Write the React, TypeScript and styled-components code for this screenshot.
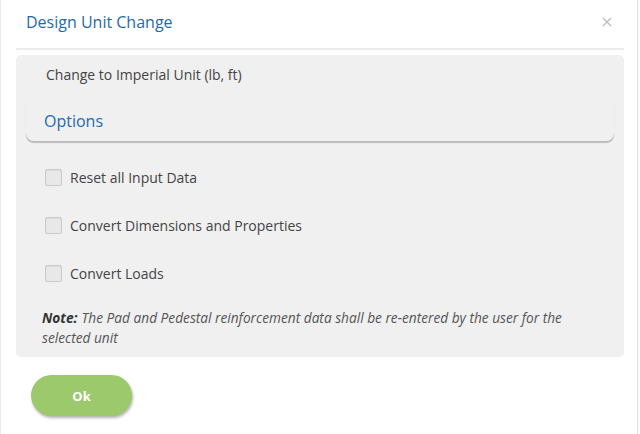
import * as React from 'react';
import styled, { createGlobalStyle } from 'styled-components';

const GlobalStyle = createGlobalStyle`
  html, body {
    margin: 0;
    padding: 0;
    background: #ffffff;
  }
  body {
    font-family: 'Open Sans', 'Noto Sans', Arial, sans-serif;
  }
`;

const Dialog = styled.div`
  box-sizing: border-box;
  width: 638px;
  height: 434px;
  padding: 0 13px 0 15px;
  background: #ffffff;
  border-left: 1px solid #ececec;
  border-right: 1px solid #e2e2e2;
`;

const Header = styled.div`
  height: 48px;
  display: flex;
  align-items: center;
  justify-content: space-between;
  padding: 0 11px 0 10px;
  border-bottom: 2px solid #ebebeb;
`;

const Title = styled.h2`
  margin: 0;
  font-size: 16px;
  font-weight: 400;
  color: #1f6aae;
  padding-bottom: 4px;
`;

const Close = styled.button`
  border: 0;
  background: none;
  padding: 0;
  width: 12px;
  height: 12px;
  margin-bottom: 4px;
  display: flex;
  align-items: center;
  justify-content: center;
  cursor: pointer;
`;

const Panel = styled.div`
  margin-top: 5px;
  background: #f0f0f0;
  border-radius: 5px;
  padding: 10px 0 9px;
`;

const UnitLine = styled.div`
  padding-left: 30px;
  font-size: 14px;
  line-height: 20px;
  color: #444444;
`;

const OptionsHead = styled.div`
  margin: 16px 10px 0;
  height: 40px;
  padding-left: 18px;
  display: flex;
  align-items: center;
  font-size: 16px;
  color: #1f6aae;
  border-radius: 0 0 8px 8px;
  box-shadow: 0 2px 1px -0.5px rgba(0, 0, 0, 0.22);
`;

const Choices = styled.div`
  display: flex;
  flex-direction: column;
  gap: 28px;
  padding: 26px 0 0 29px;
`;

const Row = styled.label`
  display: flex;
  align-items: center;
  height: 20px;
  gap: 8px;
  font-size: 14px;
  color: #444444;
  cursor: pointer;
`;

const Box = styled.span`
  box-sizing: border-box;
  width: 17px;
  height: 17px;
  border: 1px solid #c9c9c9;
  border-radius: 2px;
  background: #e8e8e8;
  box-shadow: inset 0 1px 1px rgba(0, 0, 0, 0.06);
`;

const Note = styled.p`
  margin: 25px 40px 0 26px;
  font-size: 13.7px;
  line-height: 20px;
  font-style: italic;
  color: #555555;
`;

const NoteLabel = styled.span`
  font-weight: 700;
  color: #333333;
  margin-right: 4px;
`;

const Footer = styled.div`
  padding: 18px 0 0 15px;
`;

const OkButton = styled.button`
  width: 101px;
  height: 41px;
  border: 0;
  border-radius: 21px;
  background: #9cc96b;
  color: #ffffff;
  font-family: 'Open Sans', Arial, sans-serif;
  font-weight: 700;
  font-size: 13px;
  box-shadow: 1px 2px 3px rgba(0, 0, 0, 0.3);
  cursor: pointer;
`;

const options = [
  'Reset all Input Data',
  'Convert Dimensions and Properties',
  'Convert Loads',
];

export default function App() {
  return (
    <>
      <GlobalStyle />
      <Dialog>
        <Header>
          <Title>Design Unit Change</Title>
          <Close aria-label="Close">
            <svg width="10" height="10" viewBox="0 0 10 10">
              <path d="M1 1L9 9M9 1L1 9" stroke="#bdbdbd" strokeWidth="1.4" />
            </svg>
          </Close>
        </Header>
        <Panel>
          <UnitLine>Change to Imperial Unit (lb, ft)</UnitLine>
          <OptionsHead>Options</OptionsHead>
          <Choices>
            {options.map((o) => (
              <Row key={o}>
                <Box />
                {o}
              </Row>
            ))}
          </Choices>
          <Note>
            <NoteLabel>Note:</NoteLabel>The Pad and Pedestal reinforcement data shall be re-entered by the
            user for the selected unit
          </Note>
        </Panel>
        <Footer>
          <OkButton>Ok</OkButton>
        </Footer>
      </Dialog>
    </>
  );
}
